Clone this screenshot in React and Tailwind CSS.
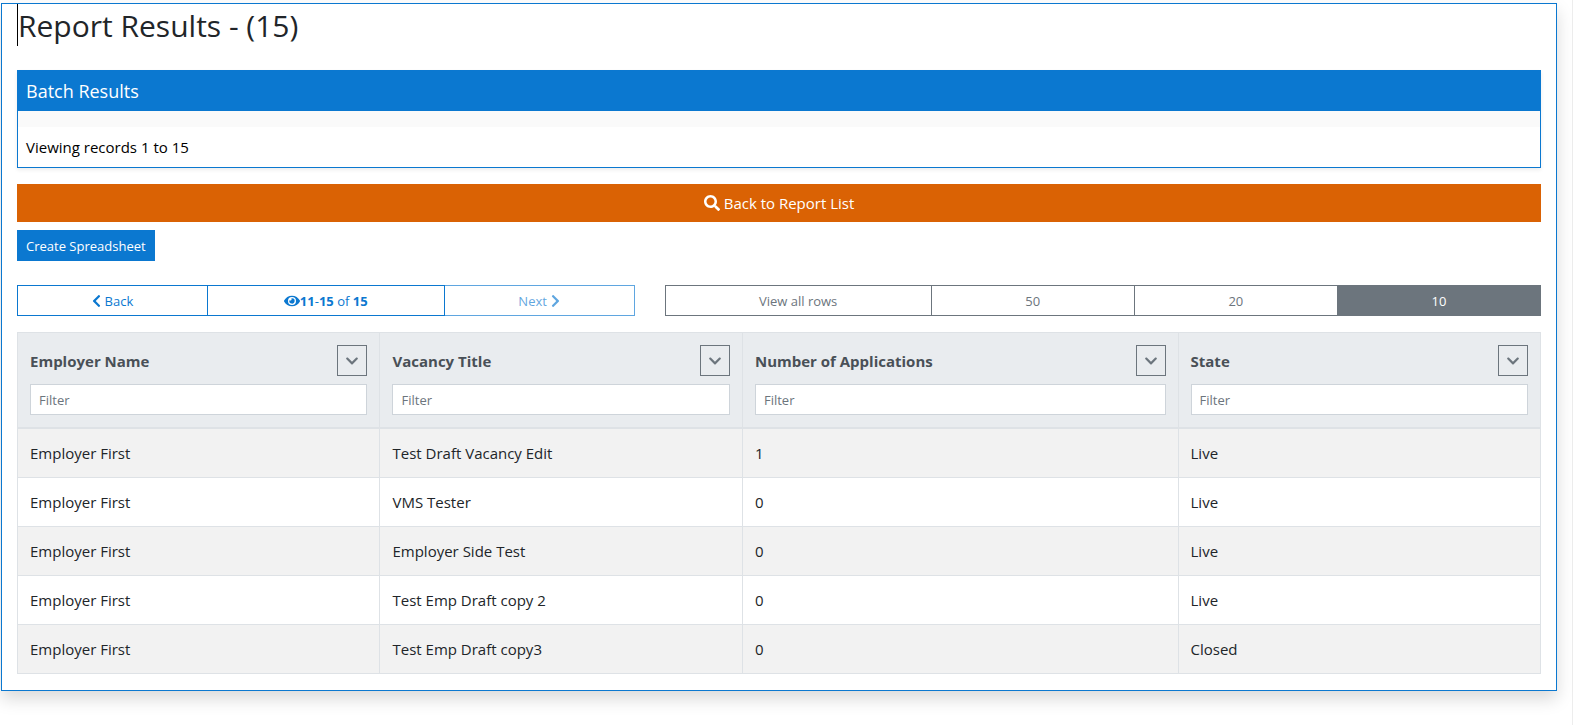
import { useState } from "react";
import {
  FaChevronDown,
  FaChevronLeft,
  FaChevronRight,
  FaEye,
  FaSearch,
} from "react-icons/fa";

const columns = [
  { key: "employer", label: "Employer Name", width: "w-[23.8%]" },
  { key: "vacancy", label: "Vacancy Title", width: "w-[23.8%]" },
  { key: "applications", label: "Number of Applications", width: "" },
  { key: "state", label: "State", width: "w-[23.8%]" },
];

const rows = [
  { employer: "Employer First", vacancy: "Test Draft Vacancy Edit", applications: "1", state: "Live" },
  { employer: "Employer First", vacancy: "VMS Tester", applications: "0", state: "Live" },
  { employer: "Employer First", vacancy: "Employer Side Test", applications: "0", state: "Live" },
  { employer: "Employer First", vacancy: "Test Emp Draft copy 2", applications: "0", state: "Live" },
  { employer: "Employer First", vacancy: "Test Emp Draft copy3", applications: "0", state: "Closed" },
];

const pageSizes = ["View all rows", "50", "20", "10"];

export default function App() {
  const [filters, setFilters] = useState({});
  const [pageSize, setPageSize] = useState("10");

  const visibleRows = rows.filter((row) =>
    columns.every((c) =>
      row[c.key].toLowerCase().includes((filters[c.key] || "").toLowerCase())
    )
  );

  return (
    <div className="min-h-screen border-r border-[#ededed] bg-white pt-[3px] pr-[15px] pl-px font-['Open_Sans','Noto_Sans',sans-serif] text-[15px] leading-6 text-[#212529]">
      <main className="border border-[#0b78d0] bg-white px-[15px] pb-4 shadow-[0_8px_16px_rgba(0,0,0,0.15)]">
        <h1 className="mb-6 border-l border-black pt-[2px] text-[30px] leading-[40px] font-normal">
          Report Results - (15)
        </h1>

        {/* BATCH SUMMARY */}
        <section className="mb-4 border border-[#0b78d0] shadow-[0_2px_4px_rgba(0,0,0,0.075)]">
          <h2 className="bg-[#0b78d0] px-2 pt-2 pb-2 text-[18px] leading-6 text-white">
            Batch Results
          </h2>
          <div className="h-4 bg-[#fafafa]" />
          <p className="px-2 py-2 text-black">Viewing records 1 to 15</p>
        </section>

        <button
          type="button"
          className="mb-2 flex h-[38px] w-full items-center justify-center gap-1 bg-[#da6204] text-white"
        >
          <FaSearch className="size-4" />
          Back to Report List
        </button>

        <button
          type="button"
          className="mb-6 block h-[31px] bg-[#0b78d0] px-[9px] text-[13px] text-white"
        >
          Create Spreadsheet
        </button>

        {/* PAGING */}
        <div className="-mx-[15px] mb-4 flex text-[13px]">
          <div className="w-5/12 px-[15px]">
            <div className="flex h-[31px] text-[#0b78d0]">
              <button
                type="button"
                className="flex flex-4 items-center justify-center gap-1 border border-[#0b78d0]"
              >
                <FaChevronLeft className="h-[14px] w-[9px]" />
                Back
              </button>
              <button
                type="button"
                className="-ml-px flex flex-5 items-center justify-center border border-[#0b78d0]"
              >
                <FaEye className="size-4" />
                <span>
                  <b>11</b>-<b>15</b> of <b>15</b>
                </span>
              </button>
              <button
                type="button"
                disabled
                className="flex flex-4 items-center justify-center gap-1 border border-l-0 border-[#0b78d0] opacity-65"
              >
                Next
                <FaChevronRight className="h-[14px] w-[9px]" />
              </button>
            </div>
          </div>
          <div className="w-7/12 px-[15px]">
            <div className="flex h-[31px]">
              {pageSizes.map((size) => (
                <button
                  key={size}
                  type="button"
                  onClick={() => setPageSize(size)}
                  className={`-ml-px flex-16 border border-[#6c757d] first:ml-0 first:flex-21 ${
                    pageSize === size ? "bg-[#6c757d] text-white" : "text-[#6c757d]"
                  }`}
                >
                  {size}
                </button>
              ))}
            </div>
          </div>
        </div>

        {/* RESULTS TABLE */}
        <table className="w-full table-fixed border-collapse border border-[#dee2e6]">
          <thead className="bg-[#e9ecef] text-[#495057]">
            <tr>
              {columns.map((c) => (
                <th
                  key={c.key}
                  className={`border border-b-2 border-[#dee2e6] p-3 text-left font-bold ${c.width}`}
                >
                  <div className="mb-2 flex items-center justify-between">
                    <label htmlFor={c.key}>{c.label}</label>
                    <button
                      type="button"
                      aria-label={`${c.label} options`}
                      className="flex h-[31px] w-[30px] items-center justify-center border border-[#6c757d] text-[#6c757d]"
                    >
                      <FaChevronDown className="size-[14px]" />
                    </button>
                  </div>
                  <input
                    id={c.key}
                    type="text"
                    placeholder="Filter"
                    value={filters[c.key] || ""}
                    onChange={(e) => setFilters({ ...filters, [c.key]: e.target.value })}
                    className="block h-[31px] w-full border border-[#ced4da] bg-white px-2 text-[13px] font-normal placeholder:text-[#6c757d]"
                  />
                </th>
              ))}
            </tr>
          </thead>
          <tbody>
            {visibleRows.map((row) => (
              <tr key={row.vacancy} className="odd:bg-[#f2f2f2]">
                {columns.map((c) => (
                  <td key={c.key} className="border border-[#dee2e6] p-3">
                    {row[c.key]}
                  </td>
                ))}
              </tr>
            ))}
          </tbody>
        </table>
      </main>
    </div>
  );
}
